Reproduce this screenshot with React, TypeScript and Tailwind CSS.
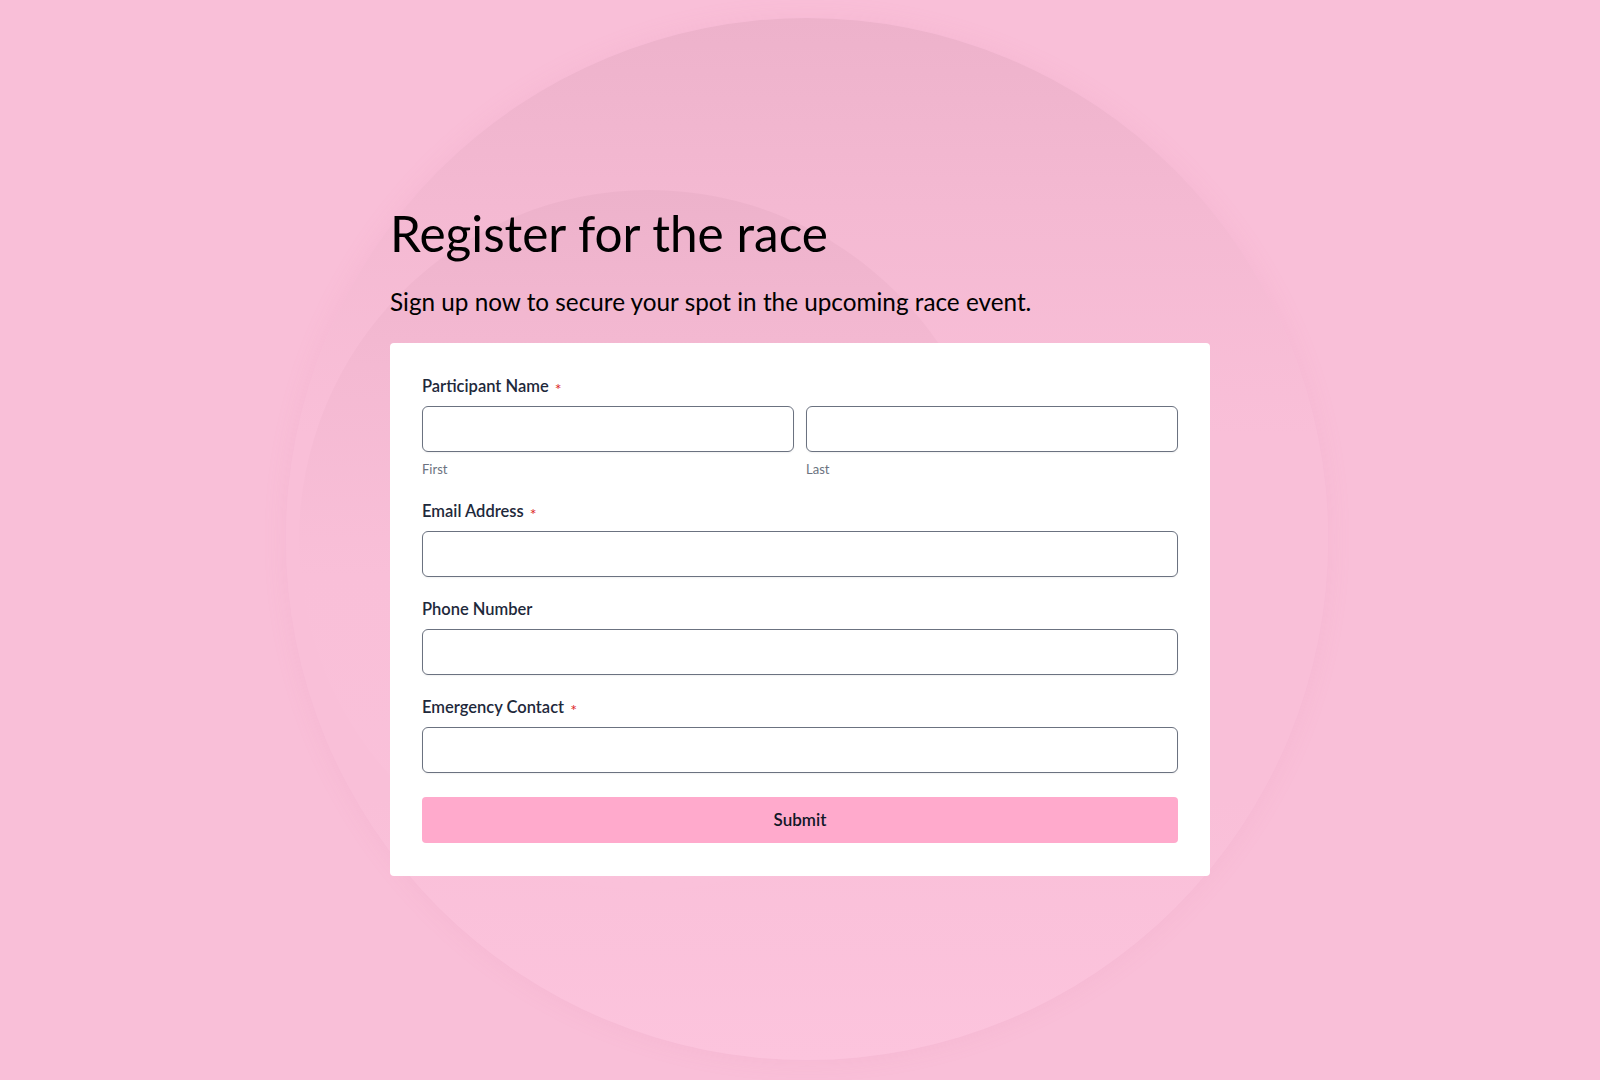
import React from "react";

function Label({ text, required }: { text: string; required?: boolean }) {
  return (
    <label className="flex items-center h-5 text-[16.5px] font-semibold text-[#1e293b]">
      {text}
      {required && (
        <span className="ml-[6px] translate-y-[3px] text-[16px] leading-none font-normal text-[#dc2626]">*</span>
      )}
    </label>
  );
}

function Input() {
  return (
    <input
      type="text"
      className="block w-full h-[46px] rounded-[6px] border border-[#6b7280] bg-white shadow-[0_1px_2px_rgba(0,0,0,0.06)] outline-none"
    />
  );
}

export default function App() {
  return (
    <div
      className="relative w-full min-h-[1080px] overflow-hidden bg-[#f9bfd8] text-black"
      style={{ fontFamily: "Lato, 'Open Sans', sans-serif" }}
    >
      {/* decorative background circles */}
      <div className="pointer-events-none absolute left-[286px] top-[18px] h-[1042px] w-[1042px] rounded-full bg-[linear-gradient(to_bottom,#edb2cb_0%,#f4b9d2_18%,#f9bfd8_40%,#f9bfd8_75%,#fcc4dd_100%)] shadow-[0_0_24px_rgba(220,130,170,0.12)]" />
      <div className="pointer-events-none absolute left-[299px] top-[190px] h-[700px] w-[700px] rounded-full bg-[linear-gradient(to_bottom,#edb2cb_0%,#f4b9d2_25%,#f9bfd8_55%,#fac1da_100%)]" />

      <div className="relative flex justify-center pt-[203px]">
        <div className="w-[820px]">
          <h1 className="text-[49.5px] leading-[60px] font-normal text-black">Register for the race</h1>
          <p className="mt-[23px] text-[24.3px] leading-[32px] text-black">
            Sign up now to secure your spot in the upcoming race event.
          </p>
          <div className="mt-[25px] rounded-[4px] bg-white px-8 pt-[33px] pb-[33px]">
            <Label text="Participant Name" required />
            <div className="mt-[10px] grid grid-cols-2 gap-3">
              <div>
                <Input />
                <div className="mt-[9px] text-[13px] leading-4 text-[#6b7280]">First</div>
              </div>
              <div>
                <Input />
                <div className="mt-[9px] text-[13px] leading-4 text-[#6b7280]">Last</div>
              </div>
            </div>

            <div className="mt-[24px]">
              <Label text="Email Address" required />
              <div className="mt-[10px]">
                <Input />
              </div>
            </div>

            <div className="mt-[22px]">
              <Label text="Phone Number" />
              <div className="mt-[10px]">
                <Input />
              </div>
            </div>

            <div className="mt-[22px]">
              <Label text="Emergency Contact" required />
              <div className="mt-[10px]">
                <Input />
              </div>
            </div>

            <button
              type="button"
              className="mt-[24px] flex h-[46px] w-full items-center justify-center rounded-[4px] bg-[#ffaacc] text-[17px] font-semibold text-[#111827]"
            >
              Submit
            </button>
          </div>
        </div>
      </div>
    </div>
  );
}
